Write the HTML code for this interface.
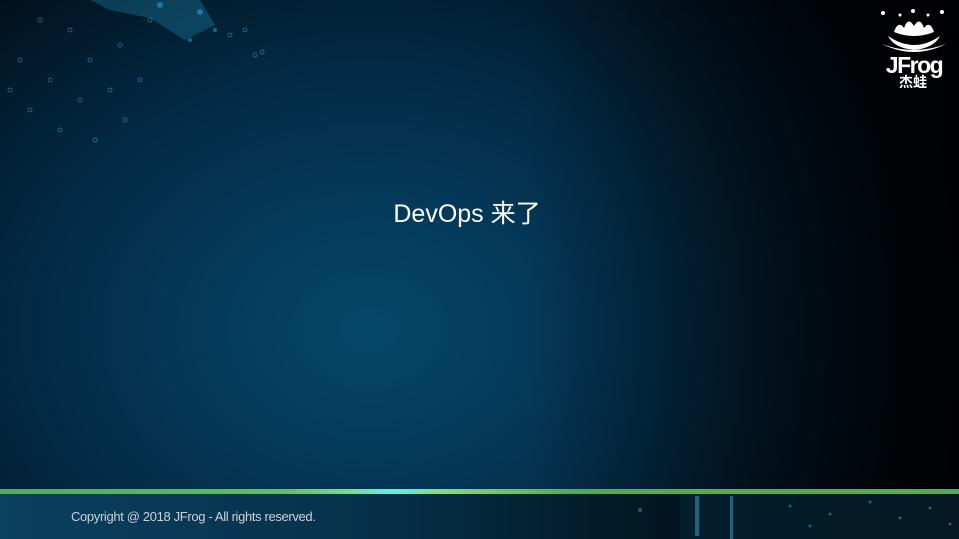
<!DOCTYPE html>
<html><head><meta charset="utf-8"><style>
html,body{margin:0;padding:0;width:959px;height:539px;overflow:hidden;background:#000}
.main{position:absolute;left:0;top:0;width:959px;height:489px;
background:radial-gradient(ellipse 620px 480px at 370px 330px,#06476a 0%,#043858 30%,#032a44 55%,#021a2c 78%,#010a12 100%);}
.main:after{content:"";position:absolute;inset:0;background:linear-gradient(90deg,rgba(0,0,0,0) 55%,rgba(0,0,0,0.9) 100%)}
.title{position:absolute;left:0;width:934px;top:194px;text-align:center;color:#fff;font-size:25px;
font-family:"Liberation Sans","Noto Sans CJK SC",sans-serif;z-index:2}
.bar{position:absolute;left:0;top:489px;width:959px;height:5px;
background:linear-gradient(90deg,#4caf50 0%,#5cc45a 30%,#6fe08a 36%,#5ff0e0 41%,#7ee07a 46%,#4caf50 60%,#4caf50 100%)}
.foot{position:absolute;left:0;top:494px;width:959px;height:45px;
background:linear-gradient(90deg,#0a4060 0%,#063048 40%,#021520 70%,#020c14 100%)}
.copy{position:absolute;left:71px;top:509px;color:#c8d2da;font-size:13px;font-family:"Liberation Sans",sans-serif;letter-spacing:-0.35px}
.logo{position:absolute;left:878px;top:8px;width:72px;height:80px;z-index:3}
</style></head><body>
<div class="main"></div>
<svg style="position:absolute;left:0;top:0;z-index:1" width="300" height="160">
<g fill="none" stroke="#3fa7c9" stroke-opacity=".5" stroke-width="1">
<circle cx="40" cy="20" r="2"/><circle cx="70" cy="30" r="2"/><circle cx="20" cy="60" r="2"/><circle cx="50" cy="80" r="2"/>
<circle cx="90" cy="60" r="2"/><circle cx="120" cy="45" r="2"/><circle cx="30" cy="110" r="2"/><circle cx="80" cy="100" r="2"/>
<circle cx="110" cy="90" r="2"/><circle cx="60" cy="130" r="2"/><circle cx="140" cy="80" r="2"/><circle cx="10" cy="90" r="2"/>
<circle cx="125" cy="120" r="2"/><circle cx="95" cy="140" r="2"/><circle cx="150" cy="20" r="2"/><circle cx="230" cy="35" r="2"/>
<circle cx="255" cy="55" r="2"/><circle cx="262" cy="52" r="2"/><circle cx="245" cy="30" r="2"/>
</g>
<g fill="#2ab0e0" fill-opacity=".5">
<path d="M90 0 L200 0 L215 25 L185 40 L150 18 L110 10Z" fill-opacity=".25"/>
<circle cx="160" cy="5" r="3"/><circle cx="200" cy="12" r="3"/><circle cx="215" cy="30" r="2"/><circle cx="190" cy="40" r="2"/>
</g>
</svg>
<div class="title">DevOps 来了</div>
<svg class="logo" viewBox="0 0 72 80">
<g fill="#fff">
<path d="M10 28 Q36 46 62 28 Q56 40 36 42 Q16 40 10 28Z"/>
<path d="M16 24 Q20 12 26 20 Q30 8 36 18 Q42 8 46 20 Q52 12 56 24 Q36 32 16 24Z"/>
<circle cx="5" cy="5" r="2"/><circle cx="35" cy="3" r="2"/><circle cx="64" cy="4" r="2"/><circle cx="22" cy="7" r="1.5"/><circle cx="50" cy="7" r="1.5"/>
<path d="M4 36 Q36 52 68 36 Q36 48 4 36Z"/>
</g>
<text x="36" y="65" text-anchor="middle" fill="#fff" font-family="Liberation Sans,sans-serif" font-weight="bold" font-size="23" letter-spacing="-1.5">JFrog</text>
<text x="35" y="79" text-anchor="middle" fill="#fff" font-family="Noto Sans CJK SC,sans-serif" font-weight="bold" font-size="14">杰蛙</text>
</svg>
<div class="bar"></div>
<div class="foot">
<svg width="959" height="45" style="position:absolute;left:0;top:0">
<rect x="680" y="0" width="279" height="45" fill="#1a6a90" fill-opacity=".12"/>
<g fill="#3fb8e8" fill-opacity=".45">
<rect x="695" y="2" width="4" height="40"/><rect x="730" y="2" width="3" height="43"/>
<circle cx="640" cy="16" r="2"/><circle cx="790" cy="12" r="1.5"/><circle cx="830" cy="20" r="1.5"/><circle cx="870" cy="8" r="1.5"/>
<circle cx="900" cy="24" r="1.5"/><circle cx="930" cy="14" r="1.5"/><circle cx="950" cy="30" r="1.5"/><circle cx="810" cy="32" r="1.5"/>
</g>
</svg>
</div>
<div class="copy">Copyright @ 2018 JFrog - All rights reserved.</div>
</body></html>
